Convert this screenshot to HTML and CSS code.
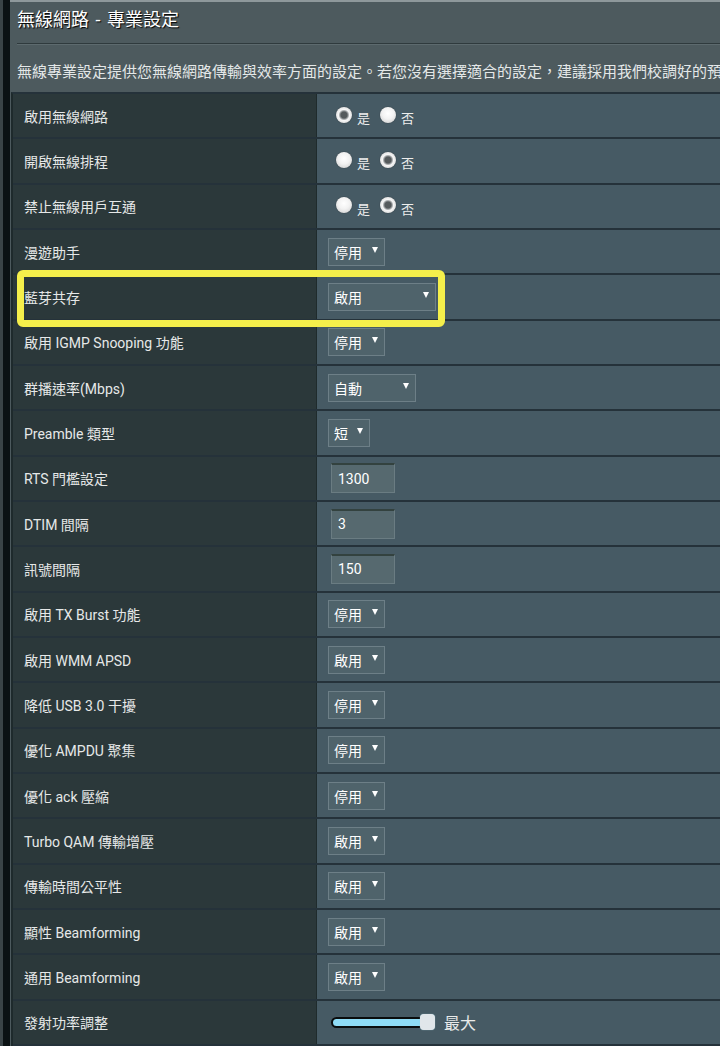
FILE: index.html
```html
<!DOCTYPE html>
<html lang="zh-Hant">
<head>
<meta charset="utf-8">
<title>無線網路 - 專業設定</title>
<link rel="stylesheet" href="styles.css">
</head>
<body>
<div class="layout">
  <div class="side"></div>
  <main class="panel">
    <h1 class="title">無線網路 - 專業設定</h1>
    <p class="desc">無線專業設定提供您無線網路傳輸與效率方面的設定。若您沒有選擇適合的設定，建議採用我們校調好的預設值。</p>
    <div class="table">
      <div class="row">
        <div class="label">啟用無線網路</div>
        <div class="value"><div class="radios"><span class="radio on"></span><span class="rlabel">是</span><span class="radio"></span><span class="rlabel">否</span></div></div>
      </div>
      <div class="row">
        <div class="label">開啟無線排程</div>
        <div class="value"><div class="radios"><span class="radio"></span><span class="rlabel">是</span><span class="radio on"></span><span class="rlabel">否</span></div></div>
      </div>
      <div class="row">
        <div class="label">禁止無線用戶互通</div>
        <div class="value"><div class="radios"><span class="radio"></span><span class="rlabel">是</span><span class="radio on"></span><span class="rlabel">否</span></div></div>
      </div>
      <div class="row">
        <div class="label">漫遊助手</div>
        <div class="value"><div class="sel">停用</div></div>
      </div>
      <div class="row">
        <div class="label">藍芽共存</div>
        <div class="value"><div class="sel sel-wide">啟用</div></div>
        <div class="highlight"></div>
      </div>
      <div class="row">
        <div class="label">啟用 IGMP Snooping 功能</div>
        <div class="value"><div class="sel">停用</div></div>
      </div>
      <div class="row">
        <div class="label">群播速率(Mbps)</div>
        <div class="value"><div class="sel sel-mid">自動</div></div>
      </div>
      <div class="row">
        <div class="label">Preamble 類型</div>
        <div class="value"><div class="sel sel-sm">短</div></div>
      </div>
      <div class="row">
        <div class="label">RTS 門檻設定</div>
        <div class="value"><div class="num">1300</div></div>
      </div>
      <div class="row">
        <div class="label">DTIM 間隔</div>
        <div class="value"><div class="num">3</div></div>
      </div>
      <div class="row">
        <div class="label">訊號間隔</div>
        <div class="value"><div class="num">150</div></div>
      </div>
      <div class="row">
        <div class="label">啟用 TX Burst 功能</div>
        <div class="value"><div class="sel">停用</div></div>
      </div>
      <div class="row">
        <div class="label">啟用 WMM APSD</div>
        <div class="value"><div class="sel">啟用</div></div>
      </div>
      <div class="row">
        <div class="label">降低 USB 3.0 干擾</div>
        <div class="value"><div class="sel">停用</div></div>
      </div>
      <div class="row">
        <div class="label">優化 AMPDU 聚集</div>
        <div class="value"><div class="sel">停用</div></div>
      </div>
      <div class="row">
        <div class="label">優化 ack 壓縮</div>
        <div class="value"><div class="sel">停用</div></div>
      </div>
      <div class="row">
        <div class="label">Turbo QAM 傳輸增壓</div>
        <div class="value"><div class="sel">啟用</div></div>
      </div>
      <div class="row">
        <div class="label">傳輸時間公平性</div>
        <div class="value"><div class="sel">啟用</div></div>
      </div>
      <div class="row">
        <div class="label">顯性 Beamforming</div>
        <div class="value"><div class="sel">啟用</div></div>
      </div>
      <div class="row">
        <div class="label">通用 Beamforming</div>
        <div class="value"><div class="sel">啟用</div></div>
      </div>
      <div class="row">
        <div class="label">發射功率調整</div>
        <div class="value"><div class="slider"><div class="track"><span class="thumb"></span></div><span class="slabel">最大</span></div></div>
      </div>
    </div>
  </main>
</div>
</body>
</html>
```

FILE: styles.css
```css
html, body {
  margin: 0;
  padding: 0;
}
body {
  background: #0c1315;
  overflow: hidden;
  font-family: Roboto, "Noto Sans CJK TC", "Noto Sans", sans-serif;
  color: #e6e8e8;
}
.layout {
  display: flex;
  width: 790px;
  min-height: 1046px;
}
.side {
  width: 10px;
  flex: none;
  background: linear-gradient(to right, #3a4447 0 3px, #0b1214 3px);
}
.panel {
  flex: 1;
  background: #4d5a5e;
  border-top: 2px solid #8e989b;
  overflow: hidden;
}
.title {
  margin: 0 0 0 7px;
  padding: 6px 0 11px 0;
  font-size: 18px;
  line-height: 24px;
  font-weight: normal;
  word-spacing: 2px;
  color: #ffffff;
  text-shadow: 1px 1px 1px #000;
  border-bottom: 1px solid #2f3a3d;
  box-shadow: 0 1px 0 #5d6a6e;
}
.desc {
  margin: 18px 0 10px 7px;
  font-size: 15px;
  line-height: 20px;
  white-space: nowrap;
  color: #e4e8e8;
}
.table {
  margin-left: 1px;
  border-top: 2px solid #25323a;
  border-left: 2px solid #1e2a2c;
}
.row {
  position: relative;
  display: flex;
  height: 45.33px;
  box-sizing: border-box;
  border-bottom: 2px solid #25323a;
}
.label {
  width: 304px;
  flex: none;
  box-sizing: border-box;
  background: #2b383a;
  border-right: 1px solid #1f2b2c;
  padding-left: 11px;
  display: flex;
  align-items: center;
  font-size: 14px;
  color: #e6e8e8;
}
.value {
  flex: 1;
  background: #465a64;
  display: flex;
  align-items: center;
  padding-left: 11px;
}
.radios {
  display: flex;
  align-items: center;
  margin-left: 8px;
  margin-top: -2px;
}
.radio {
  width: 16px;
  height: 16px;
  border-radius: 50%;
  background: radial-gradient(circle at 50% 40%, #ffffff 0, #f2f2f2 45%, #c9c9c9 100%);
  box-shadow: 0 0 1px #2a2a2a;
}
.radio.on {
  background: radial-gradient(circle, #555a5c 0 3px, #8a8e90 4px, #f6f6f6 5.5px, #e4e4e4 70%, #bcbcbc 100%);
}
.rlabel {
  font-size: 13px;
  color: #eeeeee;
  margin: 6px 10px 0 5px;
}
.rlabel:last-child {
  margin-right: 0;
}
.sel {
  width: 57px;
  height: 28px;
  box-sizing: border-box;
  border: 1px solid #6d7f87;
  background: #4f636b;
  display: flex;
  align-items: center;
  justify-content: space-between;
  padding: 0 6px 0 5px;
  font-size: 14px;
  color: #ffffff;
}
.sel::after {
  content: "";
  border-left: 3.5px solid transparent;
  border-right: 3.5px solid transparent;
  border-top: 6px solid #ffffff;
  margin-top: -4px;
}
.sel-wide {
  width: 108px;
}
.sel-mid {
  width: 88px;
}
.sel-sm {
  width: 42px;
}
.num {
  width: 64px;
  height: 30px;
  box-sizing: border-box;
  margin-left: 3px;
  padding-left: 6px;
  background: #56696f;
  border: 1px solid #6a7c82;
  border-top: 2px solid #33423f;
  display: flex;
  align-items: center;
  font-size: 14px;
  color: #ffffff;
}
.slider {
  display: flex;
  align-items: center;
  margin-left: 3px;
}
.track {
  position: relative;
  width: 104px;
  height: 11px;
  box-sizing: border-box;
  border: 2px solid #0a0d0e;
  border-radius: 6px;
  background: #8fdcf6;
}
.thumb {
  position: absolute;
  right: -2px;
  top: 50%;
  transform: translateY(-50%);
  width: 15px;
  height: 16px;
  border-radius: 4px;
  background: #e1e6ea;
  box-shadow: 0 0 1px #9ccbd8;
}
.slabel {
  margin-left: 9px;
  font-size: 16px;
  color: #e8eaea;
}
.highlight {
  position: absolute;
  z-index: 2;
  left: 3.7px;
  top: -5.6px;
  width: 428px;
  height: 57.6px;
  box-sizing: border-box;
  border: 7px solid #f5ef4b;
  border-radius: 6px;
}
```
